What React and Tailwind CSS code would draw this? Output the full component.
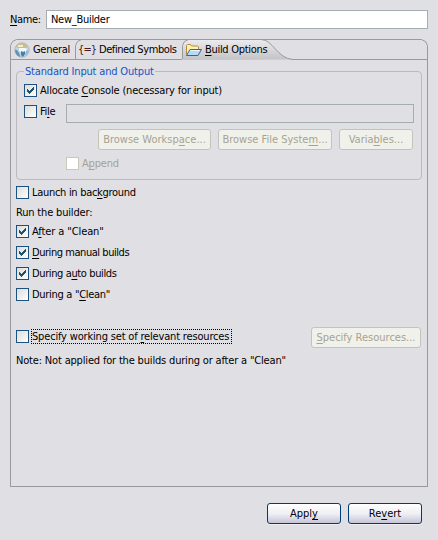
function U({ children }) {
  return <span className="underline decoration-1 underline-offset-[2px] [text-decoration-skip-ink:none]">{children}</span>;
}

function Box({ checked, disabled }) {
  return (
    <span
      className={
        disabled
          ? "block size-[13px] shrink-0 border border-[#cac8bb] bg-white"
          : "block size-[13px] shrink-0 border border-[#1c5180] bg-linear-to-br from-[#dcdcd7] to-white"
      }
    >
      {checked && (
        <svg width="11" height="11" viewBox="0 0 11 11" shapeRendering="crispEdges">
          <path d="M2 4h1v1h1v1h1V5h1V4h1V3h1V2h1v3H8v1H7v1H6v1H5v1H4V8H3V7H2z" fill="#21526b" />
        </svg>
      )}
    </span>
  );
}

function Check({ checked, disabled, className = "", children }) {
  return (
    <label className={`flex h-[13px] items-center gap-[3px] ${disabled ? "text-[#a5a392]" : ""}`}>
      <Box checked={checked} disabled={disabled} />
      <span className={`leading-[13px] ${className}`}>{children}</span>
    </label>
  );
}

function GrayButton({ className, children }) {
  return (
    <button className={`h-[21px] shrink-0 rounded-[3px] border border-[#c4c3bb] bg-[#f1f1ec] text-center leading-[19px] tracking-normal text-[#a5a392] ${className}`}>
      {children}
    </button>
  );
}

function Button({ children }) {
  return (
    <button className="h-[21px] w-[74px] rounded-[3px] border border-[#003c74] bg-linear-to-b from-white via-[#f0f0f4] via-50% to-[#c6c5d7] text-center leading-[19px] tracking-normal shadow-[0_1px_0_#eeeef2]">
      {children}
    </button>
  );
}

function GlobeIcon() {
  return (
    <svg width="16" height="16" viewBox="0 0 16 16">
      <circle cx="8" cy="8" r="7.2" fill="#c5d2d9" stroke="#a3b1b9" strokeWidth=".8" />
      <path d="M2 4.500C4 1 8 .5 11 2l3 2.500-2 1.500H4z" fill="#c9bd8c" />
      <path d="M4 3h5v2H4z" fill="#f2ecd0" />
      <path d="M1 8c0 3 2 6 5.500 7L5 11 3 8z" fill="#5d93bd" />
      <path d="M5 6h6l2 1-1 3-2 1-1-2-2 1-2-1z" fill="#f7fafa" />
      <path d="M7 9l2 1 2-1v3l-2 3-2-2z" fill="#3f82b8" />
      <path d="M12 9l2-1c.3 2-.8 4.500-3 5.500z" fill="#91b7cf" />
    </svg>
  );
}

function FolderIcon() {
  return (
    <svg width="16" height="14" viewBox="0 0 16 14">
      <path d="M.5 11.500V2.500l1-1h3l1 1.500h6l1 1v2" fill="#fdf0b8" stroke="#b98b35" />
      <path d="M.5 12.500l3.500-6h11.500l-3.500 6z" fill="#b5dcf2" stroke="#32679d" />
      <path d="M4.500 7.500h9" stroke="#eaf7fd" />
    </svg>
  );
}

function Tabs() {
  return (
    <div className="relative h-[21px] w-[418px] shrink-0">
      <svg className="absolute inset-0" width="418" height="21" viewBox="0 0 418 21" fill="none">
        <defs>
          <linearGradient id="tab" x1="0" y1="0" x2="0" y2="1">
            <stop offset="0" stopColor="#ececef" />
            <stop offset="1" stopColor="#c3c2c5" />
          </linearGradient>
        </defs>
        <path d="M172.500 21V6.500l2-4 4-2H251c12 0 16 19 32 20z" fill="url(#tab)" />
        <path d="M.5 21V6.500l2-4 4-2h405l4 2 2 4V21M65.500 20V6.500l2-4 4-2M172.500 20V6.500l2-4 4-2M251 .5c12 0 16 19 32 20M0 20.500h172M282 20.500h136" stroke="#9a99a0" />
      </svg>
      <div className="relative flex h-[21px] items-center pt-px">
        <div className="flex w-[66px] items-center gap-[3px] pl-1">
          <GlobeIcon />
          <span className="tracking-[-0.3px]">General</span>
        </div>
        <div className="flex w-[107px] items-center gap-[4px] pl-[2px]">
          <span className="w-[17px] tracking-[-0.9px] text-[#4b1717]">{"{=}"}</span>
          <span className="tracking-[-0.42px]">Defined Symbols</span>
        </div>
        <div className="flex items-center gap-[3px] pl-[3px]">
          <FolderIcon />
          <span className="tracking-[-0.3px]"><U>B</U>uild Options</span>
        </div>
      </div>
    </div>
  );
}

export default function App() {
  return (
    <div className="flex h-[540px] w-[438px] flex-col bg-[#e0dfe3] px-[10px] pt-[10px] font-['DejaVu_Sans_Condensed','DejaVu_Sans',sans-serif] text-[11px] tracking-[-0.175px] whitespace-nowrap text-black">
      <div className="flex h-[19px] shrink-0 items-center">
        <span className="w-9 pt-px tracking-[-0.35px]"><U>N</U>ame:</span>
        <div className="h-[19px] w-[382px] border border-[#a5acb2] bg-white pl-1 leading-[18px] tracking-[-0.28px]">New_Builder</div>
      </div>
      <div className="mt-[10px] flex h-[448px] shrink-0 flex-col">
        <Tabs />
        <div className="flex h-[427px] w-[418px] flex-col border-x border-b border-[#9a99a0] px-[5px]">
          <fieldset className="mt-[3px] h-[117px] w-[406px] shrink-0 rounded-[4px] border border-[#bbbac0] px-[7px]">
            <legend className="h-[17px] px-[1px] leading-[18px] text-[#1653c4]">Standard Input and Output</legend>
            <div className="mt-[4px] flex flex-col">
              <Check checked>Allocate <U>C</U>onsole (necessary for input)</Check>
              <div className="mt-[7px] flex h-5 items-start">
                <div className="w-[42px] pt-px"><Check className="tracking-[-0.3px]">Fi<U>l</U>e</Check></div>
                <div className="h-[19px] w-[348px] border border-[#a5acb2]" />
              </div>
              <div className="mt-[5px] flex gap-[7px] pl-[74px]">
                <GrayButton className="w-[113px]">Browse Worksp<U>a</U>ce...</GrayButton>
                <GrayButton className="w-[114px]">Browse File Syste<U>m</U>...</GrayButton>
                <GrayButton className="w-[74px]">Varia<U>b</U>les...</GrayButton>
              </div>
              <div className="mt-[7px] pl-[42px]"><Check disabled>A<U>p</U>pend</Check></div>
            </div>
          </fieldset>
          <div className="mt-[6px]"><Check className="tracking-[-0.3px]">Launch in bac<U>k</U>ground</Check></div>
          <div className="mt-[7px] h-[13px] leading-[13px]">Run the builder:</div>
          <div className="mt-[6px] flex flex-col gap-2">
            <Check checked className="tracking-[-0.1px]">A<U>f</U>ter a "Clean"</Check>
            <Check checked className="tracking-[-0.45px]"><U>D</U>uring manual builds</Check>
            <Check checked className="tracking-[-0.38px]">During a<U>u</U>to builds</Check>
            <Check className="tracking-[-0.3px]">During a "<U>C</U>lean"</Check>
          </div>
          <div className="mt-[26px] flex h-[21px] shrink-0 items-start justify-between pr-px">
            <div className="flex items-center gap-[2px] pt-[2px]">
              <Box />
              <span className="h-[15px] w-[201px] border border-dotted border-black leading-[13px]">Specify working set of <U>r</U>elevant resources</span>
            </div>
            <GrayButton className="w-[110px]"><U>S</U>pecify Resources...</GrayButton>
          </div>
          <div className="mt-[6px] h-[13px] leading-[13px]">Note: Not applied for the builds during or after a "Clean"</div>
        </div>
      </div>
      <div className="mt-4 flex justify-end gap-[7px] pr-[6px]">
        <Button>Appl<U>y</U></Button>
        <Button>Re<U>v</U>ert</Button>
      </div>
    </div>
  );
}
